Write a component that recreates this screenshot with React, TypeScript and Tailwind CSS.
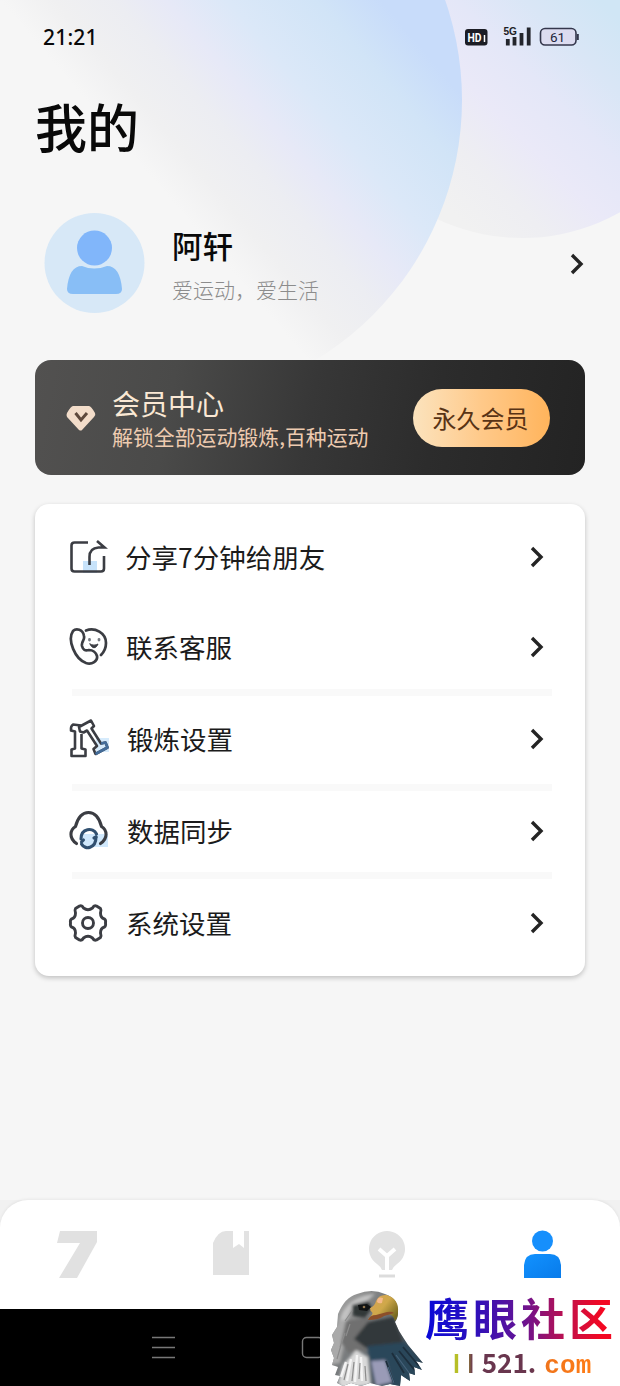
import React from 'react';

const FONT = "font-['Noto_Sans_CJK_SC',sans-serif]";

function Backdrop() {
  return (
    <svg className="absolute inset-0" width="620" height="480" viewBox="0 0 620 480">
      <defs>
        <linearGradient id="discA" gradientUnits="userSpaceOnUse" x1="0" y1="0" x2="220" y2="-188">
          <stop offset="0" stopColor="#f6f6f6" />
          <stop offset="0.14" stopColor="#f0f0f1" />
          <stop offset="0.3" stopColor="#ecedf2" />
          <stop offset="0.43" stopColor="#e7e9f7" />
          <stop offset="0.6" stopColor="#dbe8f8" />
          <stop offset="0.83" stopColor="#d1e4f7" />
          <stop offset="1" stopColor="#c8dcfa" />
        </linearGradient>
        <linearGradient id="discB" gradientUnits="userSpaceOnUse" x1="120" y1="-120" x2="300" y2="-300">
          <stop offset="0" stopColor="#f1f1f1" />
          <stop offset="0.2" stopColor="#eeeef2" />
          <stop offset="0.4" stopColor="#eae9f8" />
          <stop offset="0.6" stopColor="#e4e7f8" />
          <stop offset="0.8" stopColor="#d9e6f6" />
          <stop offset="1" stopColor="#d0e6f5" />
        </linearGradient>
      </defs>
      <circle cx="522" cy="38" r="200" fill="url(#discB)" />
      <circle cx="158" cy="100" r="304" fill="url(#discA)" />
    </svg>
  );
}

function StatusIcons() {
  return (
    <svg width="118" height="26" viewBox="462 24 118 26">
      <rect x="465" y="29" width="22.500" height="16.500" rx="3" fill="#1c1d25" />
      <text x="467.500" y="42" fontSize="12.500" fontWeight="700" fill="#fff" fontFamily="Liberation Sans Narrow, Roboto" textLength="14" lengthAdjust="spacingAndGlyphs">HD</text>
      <path d="M484.500 35v7" stroke="#fff" strokeWidth="1.500" />
      <text x="503.500" y="35" fontSize="10.500" fontWeight="700" fill="#1c1d25" fontFamily="Liberation Sans" textLength="13.500" lengthAdjust="spacingAndGlyphs">5G</text>
      <path d="M507.800 39v6.500M514.500 37v8.500M521.500 33v12.500M528.700 27.500v18" stroke="#23252c" strokeWidth="3.800" />
      <rect x="540.500" y="28.500" width="35.500" height="16.500" rx="4.500" fill="#dcdcf0" stroke="#34374c" strokeWidth="1.600" />
      <path d="M577.800 34v6" stroke="#34374c" strokeWidth="2" />
      <text x="550" y="41.500" fontSize="13.500" fill="#22243a" fontFamily="Roboto" textLength="15">61</text>
    </svg>
  );
}

function Chevron() {
  return (
    <svg width="14" height="22" viewBox="0 0 14 22" fill="none">
      <path d="M2 2l9 9-9 9" stroke="#242424" strokeWidth="3.400" />
    </svg>
  );
}

function ShareIcon() {
  return (
    <svg width="40" height="40" viewBox="0 0 40 40" fill="none" stroke="#3b3d43" strokeWidth="2.600">
      <path d="M15 24h14v12H15z" fill="#c8e3fa" stroke="none" />
      <path d="M20 5.500H6.500q-3 0-3 3V31.500q0 3 3 3H33q3 0 3-3V19" />
      <path d="M21.500 28V20q0-9 9-9.500h6L29 4" />
    </svg>
  );
}

function PhoneIcon() {
  return (
    <svg width="40" height="40" viewBox="0 0 40 40" fill="none" stroke="#3b3d43" strokeWidth="2.700" strokeLinecap="round" strokeLinejoin="round">
      <path d="M5 4C8 1 15 2 16 9c1 5-3 5-2 10 1 4 3 5 7 4 4 0 7 3 8 6 1 5-5 9-11 7C7 32-1 13 5 4z" />
      <path d="M18 3.500C27 0 38 6 38 16c0 5-2 9-5 12" />
      <path d="M21.500 12.500v.5M31 12.500v.5" strokeWidth="2.800" stroke="#777b82" />
      <path d="M22 17c2 5 6 5 8 0-2 1.500-6 1.500-8 0z" fill="#3b3d43" strokeWidth="1" />
    </svg>
  );
}

function DumbbellIcon() {
  return (
    <svg width="42" height="42" viewBox="0 0 42 42" fill="none" stroke="#3b3d43" strokeWidth="2.600" strokeLinejoin="round">
      <path d="M28 20h13v14H28z" fill="#d6ebfc" stroke="none" />
      <path d="M13 7.500L5 6.500Q2.500 8 3 12.500l4 1v17l-3.500 1v6.500h14v-6.500l-4-1V16" />
      <path d="M12 13.500l-1-4.500L23 2.500l3 5.500-2.500 2.500 9.500 15 4.500-1 2 5L27.500 36l-2-5 3.500-3L19 12.500l-3.500 2z" />
      <path d="M33 25.500l4.500-1 2 5L27.500 36" stroke="#436c99" />
    </svg>
  );
}

function CloudIcon() {
  return (
    <svg width="42" height="42" viewBox="0 0 42 42" fill="none" stroke="#3b3d43" strokeWidth="3.100" strokeLinecap="round">
      <path d="M14 24h26v13H14z" fill="#d0e8fc" stroke="none" />
      <path d="M8.500 33.500C.5 28 2 20 7.500 16.500 10 7 15 2.500 20.500 2.500S31 7 33.500 16.500C39 20 40.500 28 32.500 33.500" />
      <path d="M13 29C13 18 25 17 28.500 24M28 27C28 38.500 17 40.500 13.500 34" stroke="#315070" />
      <path d="M13.500 32l2-2M28 27l-2 1" stroke="#315070" />
    </svg>
  );
}

function GearIcon() {
  return (
    <svg width="40" height="40" viewBox="0 0 40 40" fill="none" stroke="#3b3d43" strokeWidth="2.900" strokeLinejoin="round">
      <path d="M11.500 3Q14 2 15.500 5Q20 8.500 24.500 5Q26 2 28.500 3L32.500 5.500Q33.500 7 32.500 10Q32.500 15 36.500 16Q38 17 37.500 20Q38 23 36.500 24Q32.500 25 32.500 30Q33.500 33 32.500 34.500L28.500 37Q26 38 24.500 35Q20 31.500 15.500 35Q14 38 11.500 37L7.500 34.500Q6.500 33 7.500 30Q7.500 25 3.500 24Q2 23 2.500 20Q2 17 3.500 16Q7.500 15 7.500 10Q6.500 7 7.500 5.500Z" />
      <circle cx="20" cy="20" r="5.500" />
    </svg>
  );
}

function Row({ icon, label, size }: { icon: React.ReactNode; label: string; size: string }) {
  return (
    <div className={`flex items-center pl-[33px] pr-[41px] ${size}`}>
      <div className="flex w-[42px] shrink-0 justify-start">{icon}</div>
      <span className="flex-1 whitespace-nowrap text-[26.5px] leading-[40px] text-[#1b1b1b]">{label}</span>
      <Chevron />
    </div>
  );
}

function Divider({ className }: { className: string }) {
  return <div className={`ml-[37px] mr-[33px] h-[7px] shrink-0 bg-[#f9f9f9] ${className}`} />;
}

function Eagle() {
  return (
    <svg width="103" height="97" viewBox="0 0 103 97" className="shrink-0">
      <defs>
        <linearGradient id="head" x1="0" y1="0" x2="1" y2="0.6">
          <stop offset="0" stopColor="#b9b9b9" />
          <stop offset="0.4" stopColor="#858686" />
          <stop offset="1" stopColor="#34424e" />
        </linearGradient>
        <linearGradient id="beak" x1="0" y1="0" x2="1" y2="0.7">
          <stop offset="0" stopColor="#dba257" />
          <stop offset="0.55" stopColor="#cfa84a" />
          <stop offset="1" stopColor="#77691f" />
        </linearGradient>
        <filter id="soft" x="-20%" y="-20%" width="140%" height="140%">
          <feGaussianBlur stdDeviation="1.6" />
        </filter>
        <clipPath id="bird">
          <path d="M17 94l3-7-5-1 3-8-6-2 2-7-3-8 3-7-2-8 5-8 1-13Q25 8 37 5 52-1 65 5q13 4 13 18 0 6-3 10l4 9 9 14 15 18-7-2 6 9-8-3 1 8-6-2 1 8-9-6-1 11-10-2-8 2-12-3-9 3-10-3-8 3z" />
        </clipPath>
      </defs>
      <g clipPath="url(#bird)">
        <rect width="103" height="97" fill="url(#head)" />
        <g filter="url(#soft)">
          <path d="M22 24Q32 6 55 5l-8 7-14 5-6 14-10 8z" fill="#c2c2c2" />
          <path d="M12 42l10-12 7 6-5 20-4 18-12 2z" fill="#aaa" />
          <path d="M26 32l24-4 5 32-26 4-8-10z" fill="#70706f" />
          <path d="M48 33l26-5 8 22 2 12-38-3-12-9z" fill="#33373a" />
          <path d="M47 57l38-4 20 24-12 14-20 8-20-8z" fill="#2c465a" />
          <path d="M32 16l16-4 4 7-7 10-12-2z" fill="#333738" />
          <path d="M18 94l5-18 13-15 12 7 3 28-28 4z" fill="#d9d9d9" />
          <path d="M51 72l14-1 7 22-16 4z" fill="#9a9bb7" />
        </g>
        <path d="M21 88l5-15M27 92l4-22M35 93l2-27M42 92l-1-24" stroke="#f4f4f4" strokeWidth="2.400" fill="none" />
        <path d="M24 91l4-16M32 92l2-19M39 90l1-16M46 92l-1-15M17 70l4-14M20 58l5-14M26 47l4-12M25 32l7-10" stroke="#8c8c8c" strokeWidth="1.200" fill="none" />
        <path d="M72 64l12 20M79 62l18 22M83 58l16 19M66 72l8 22" stroke="#1d2e3c" strokeWidth="1.800" fill="none" />
        <path d="M76 66l14 19M68 78l6 16" stroke="#45627a" strokeWidth="1.200" fill="none" />
      </g>
      <path d="M50 19q5-2 6-7 3-7 11-6 12 4 11 17 0 6-3 9-2-8-9-7-8 1-18 5 6-5 4-7-2-1-2-4z" fill="url(#beak)" />
      <path d="M48 31q2-5 8-5l11-3q5-1 7 1-6 2-10 3-5 4-16 4z" fill="#8c4f2a" />
      <path d="M57 13q0-6 6-4l-1 5q-3 1-5-1z" fill="#f5b98a" />
      <path d="M38 16l9-1 4 3-4 4-8-1z" fill="#101314" />
      <circle cx="44" cy="18" r="1.300" fill="#907650" />
    </svg>
  );
}

export default function App() {
  return (
    <div className={`relative flex h-[1386px] w-[620px] flex-col overflow-hidden bg-[#f6f6f6] text-[#090909] ${FONT}`}>
      <Backdrop />
      <header className="relative flex h-[75px] items-center justify-between pb-px pl-[43px] pr-[40px]">
        <span className="font-['Noto_Sans',sans-serif] text-[21px] font-medium leading-[24px] tracking-[0.2px]">21:21</span>
        <StatusIcons />
      </header>

      <h1 className="relative h-[105px] pl-[35px] pt-[13px] text-[52px] font-medium leading-[76px]">我的</h1>

      <section className="relative flex h-[180px] items-start pl-[44px] pr-[36px] pt-[32px]">
        <svg width="101" height="101" viewBox="0 0 101 101" className="shrink-0">
          <circle cx="50.500" cy="51" r="50" fill="#d7e8f7" />
          <circle cx="50.500" cy="36" r="17.500" fill="#81b6fa" />
          <path d="M23 77Q25 54 38 54q12 5 25 0 13 0 15 23 0 5-6 5H29q-6 0-6-5z" fill="#88bef6" />
        </svg>
        <div className="ml-[27px] flex-1 pt-[11px]">
          <div className="text-[30.5px] font-medium leading-[44px]">阿轩</div>
          <div className="text-[21px] font-light leading-[44px] text-[#8c8c8c]">爱运动，爱生活</div>
        </div>
        <div className="pt-[41px]"><Chevron /></div>
      </section>

      <section className="relative mx-[35px] flex h-[115px] items-center rounded-[16px] bg-[linear-gradient(100deg,#525150_0%,#4a4a49_25%,#373737_50%,#2c2c2c_72%,#232323_100%)] pl-[31px] pr-[35px]">
        <svg width="30" height="28" viewBox="0 0 30 28" className="shrink-0">
          <path d="M7 2h16q2 0 6 7 1 2-1 4L16 26q-1 1-3 0L1 13q-1-2 0-4Q5 2 7 2z" fill="#f3ddca" />
          <path d="M9.500 9l5.500 7 6-7" fill="none" stroke="#5e493c" strokeWidth="3" />
        </svg>
        <div className="ml-[16px] flex-1 whitespace-nowrap pt-[2px]">
          <div className="text-[28px] leading-[35px] text-[#fae8d4]">会员中心</div>
          <div className="text-[20.9px] leading-[30px] text-[#eecbb0]">解锁全部运动锻炼,百种运动</div>
        </div>
        <div className="flex h-[58px] w-[137px] items-center justify-center rounded-full bg-gradient-to-r from-[#fbe3bd] via-[#ffc989] to-[#ffb45b] pr-[2px] text-[24px] text-[#583315]">永久会员</div>
      </section>

      <section className="relative mx-[35px] mt-[29px] flex h-[472px] flex-col rounded-[14px] bg-white pt-[7px] shadow-[0_2px_5px_rgba(0,0,0,0.22)]">
        <Row icon={<ShareIcon />} label="分享7分钟给朋友" size="h-[91px] [&>span]:pl-[15px]" />
        <Row icon={<PhoneIcon />} label="联系客服" size="h-[90px] [&>span]:pl-[16px]" />
        <Divider className="-mt-[3px] -mb-[4px]" />
        <Row icon={<DumbbellIcon />} label="锻炼设置" size="h-[92px] pt-px [&>span]:pl-[17px]" />
        <Divider className="-mb-[7px]" />
        <Row icon={<CloudIcon />} label="数据同步" size="h-[92px] pt-[2px] [&>span]:pl-[17px]" />
        <Divider className="-mt-[4px] -mb-[3px]" />
        <Row icon={<GearIcon />} label="系统设置" size="h-[92px] pt-[2px] [&>span]:pl-[16px]" />
      </section>

      <div className="mt-auto h-[186px] shrink-0 bg-[#f1f1f1]">
        <nav className="relative flex h-[109px] items-start justify-between rounded-t-[28px] bg-white pl-[56px] pr-[58px] pt-[29px] shadow-[0_-1px_3px_rgba(0,0,0,0.06)]">
          <svg width="42" height="52" viewBox="0 0 42 52">
            <path d="M4 2h37v11L21 49H3l21-35H1z" fill="#e1e1e1" />
          </svg>
          <svg width="42" height="52" viewBox="0 0 42 52">
            <path d="M2 14Q7 2 15 2h7v17l6-4 5 4V2h5v44H2z" fill="#e2e2e2" />
          </svg>
          <svg width="42" height="52" viewBox="0 0 42 52">
            <path d="M22 2a18 18 0 0 1 10 33q-3 2-5 6H17q-2-4-5-6A18 18 0 0 1 22 2z" fill="#e2e2e2" />
            <path d="M14 20l8 7 8-7M22 26v15" fill="none" stroke="#fff" strokeWidth="4" />
            <path d="M14 47h16" stroke="#dcdcdc" strokeWidth="3" />
          </svg>
          <svg width="42" height="52" viewBox="0 0 42 52">
            <defs>
              <linearGradient id="me" x1="0" y1="0" x2="1" y2="1">
                <stop offset="0" stopColor="#1292ff" />
                <stop offset="1" stopColor="#087bea" />
              </linearGradient>
            </defs>
            <circle cx="22.500" cy="12" r="10.500" fill="#168ffc" />
            <path d="M4 49V36Q5 25 15 25h15q10 0 11 11v13z" fill="url(#me)" />
          </svg>
        </nav>
        <div className="flex h-[77px] items-center bg-black">
          <svg width="620" height="77" viewBox="0 0 620 77" fill="none" stroke="#777" strokeWidth="1.400">
            <path d="M152 28.500h23M152 38.500h23M152 48.500h23" />
            <rect x="302.500" y="28.500" width="20" height="20" rx="4" />
          </svg>
        </div>
      </div>

      <div className="absolute bottom-0 left-[320px] flex h-[97px] w-[300px] bg-white">
        <Eagle />
        <div className="flex flex-col">
          <div className="ml-[2px] h-[54px] w-[192px] whitespace-nowrap bg-[linear-gradient(90deg,#0909d8_0%,#2b10bd_25%,#651395_50%,#c51048_75%,#f30822_92%)] bg-clip-text text-[44px] font-bold leading-[56px] tracking-[4px] text-transparent">鹰眼社区</div>
          <div className="ml-[30px] mt-[2px] w-[138px] whitespace-nowrap bg-[linear-gradient(90deg,#b7bf27_0%,#b7bf27_8%,#69364e_14%,#69364e_58%,#ef741c_66%,#ff7c16_100%)] bg-clip-text font-['Noto_Sans_CJK_SC',sans-serif] text-[26px] font-bold leading-[34px] text-transparent">
            <span className="font-['Liberation_Sans',sans-serif] text-[25px] tracking-[7.4px]">ll</span>521<span className="tracking-[8px]">.</span><span className="font-['Liberation_Mono',monospace] tracking-[0.2px]">com</span>
          </div>
        </div>
      </div>
    </div>
  );
}
